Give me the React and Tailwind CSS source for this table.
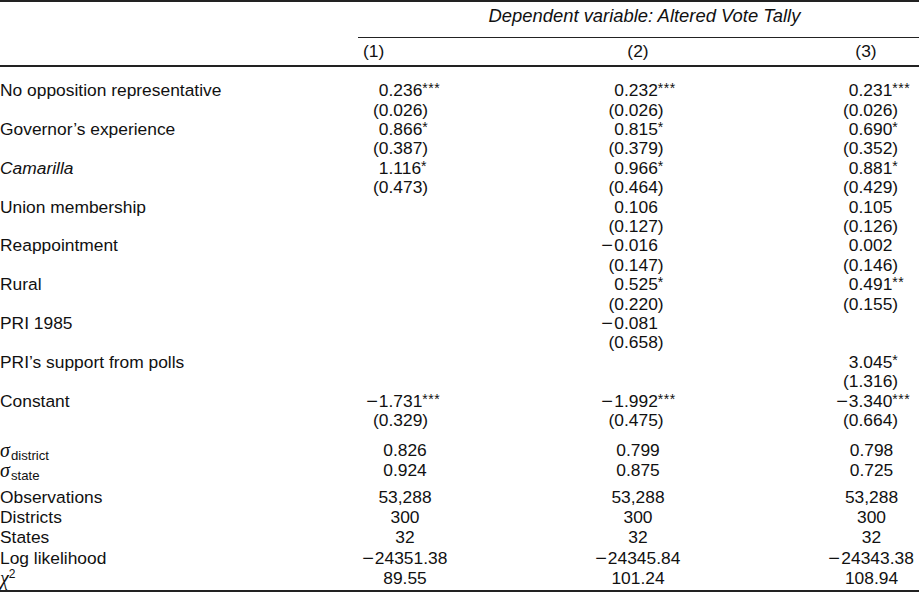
const COLS = 'grid grid-cols-[358px_94px_372px_95px]'
const INT_W = ['w-[30.5px]', 'w-[172px]', 'w-[34.5px]']

const vars = [
  { label: 'No opposition representative', coef: [['0.236', '***'], ['0.232', '***'], ['0.231', '***']], se: ['0.026', '0.026', '0.026'] },
  { label: 'Governor’s experience', coef: [['0.866', '*'], ['0.815', '*'], ['0.690', '*']], se: ['0.387', '0.379', '0.352'] },
  { label: 'Camarilla', italic: true, coef: [['1.116', '*'], ['0.966', '*'], ['0.881', '*']], se: ['0.473', '0.464', '0.429'] },
  { label: 'Union membership', coef: [null, ['0.106', ''], ['0.105', '']], se: [null, '0.127', '0.126'] },
  { label: 'Reappointment', coef: [null, ['−0.016', ''], ['0.002', '']], se: [null, '0.147', '0.146'] },
  { label: 'Rural', coef: [null, ['0.525', '*'], ['0.491', '**']], se: [null, '0.220', '0.155'] },
  { label: 'PRI 1985', coef: [null, ['−0.081', ''], null], se: [null, '0.658', null] },
  { label: 'PRI’s support from polls', coef: [null, null, ['3.045', '*']], se: [null, null, '1.316'] },
  { label: 'Constant', coef: [['−1.731', '***'], ['−1.992', '***'], ['−3.340', '***']], se: ['0.329', '0.475', '0.664'] },
]

const stats = [
  { label: 'Observations', vals: ['53,288', '53,288', '53,288'] },
  { label: 'Districts', vals: ['300', '300', '300'] },
  { label: 'States', vals: ['32', '32', '32'] },
  { label: 'Log likelihood', vals: ['−24351.38', '−24345.84', '−24343.38'] },
  { label: 'chi', vals: ['89.55', '101.24', '108.94'] },
]

function Minus() {
  return <span className="mr-[2px] inline-block scale-x-[1.15]">−</span>
}

function Num({ text }) {
  if (!text.startsWith('−')) return text
  return (
    <>
      <Minus />
      {text.slice(1)}
    </>
  )
}

function Dec({ value, stars, paren, col }) {
  if (!value) return <div />
  const [i, f] = value.split('.')
  return (
    <div className="flex whitespace-nowrap">
      <span className={`${INT_W[col]} shrink-0 text-right`}>
        {paren ? '(' : ''}
        <Num text={i} />
      </span>
      <span>
        .{f}
        {paren ? ')' : ''}
        {stars && <span className="relative -top-[3px] text-[14px] tracking-[0.5px]">{stars}</span>}
      </span>
    </div>
  )
}

function Sigma({ sub }) {
  return (
    <span>
      <span className="font-['Liberation_Serif',serif] text-[20px] italic">σ</span>
      <span className="relative top-[3px] ml-[1px] text-[13.2px]">{sub}</span>
    </span>
  )
}

export default function App() {
  return (
    <div className="w-[919px] bg-white text-[17.4px] text-[#111] font-['Liberation_Sans',Arial,sans-serif]">
      <div className="h-[1.5px] bg-[#222]" />

      {/* dependent variable header */}
      <div className="ml-[358px] pt-[4.5px] pb-[11.5px] pl-[12px] text-center text-[18.4px] italic leading-[19.5px]">
        Dependent variable: Altered Vote Tally
      </div>
      <div className="ml-[358px] h-px bg-[#222]" />
      <div className={`${COLS} pt-[4.4px] pb-[3.6px] leading-[19.5px]`}>
        <div />
        <div className="pl-[5px]">(1)</div>
        <div className="text-center">(2)</div>
        <div className="pr-[11px] text-center">(3)</div>
      </div>
      <div className="h-[1.5px] bg-[#222]" />

      {/* coefficients */}
      <div className="pt-[14.3px]">
        {vars.map(v => (
          <div key={v.label}>
            <div className={`${COLS} h-[19.4px] leading-[19.4px]`}>
              <div className={v.italic ? 'italic' : ''}>{v.label}</div>
              {v.coef.map((c, k) => (
                <Dec key={k} col={k} value={c?.[0]} stars={c?.[1]} />
              ))}
            </div>
            <div className={`${COLS} h-[19.4px] leading-[19.4px]`}>
              <div />
              {v.se.map((s, k) => (
                <Dec key={k} col={k} value={s} paren />
              ))}
            </div>
          </div>
        ))}
      </div>

      {/* random effects */}
      <div className="mt-[9.2px]">
        {[['district', ['0.826', '0.799', '0.798']], ['state', ['0.924', '0.875', '0.725']]].map(([sub, vals]) => (
          <div key={sub} className={`${COLS} h-[20.7px] leading-[20.7px]`}>
            <div><Sigma sub={sub} /></div>
            {vals.map((x, k) => (
              <div key={k} className="text-center">{x}</div>
            ))}
          </div>
        ))}
      </div>

      {/* model stats */}
      <div className="mt-[6.1px]">
        {stats.map(s => (
          <div key={s.label} className={`${COLS} h-[20.2px] leading-[20.2px]`}>
            <div>
              {s.label === 'chi' ? (
                <span>
                  <span className="font-['Liberation_Serif',serif] text-[20px] italic">χ</span>
                  <span className="relative -top-[7px] text-[12px]">2</span>
                </span>
              ) : (
                s.label
              )}
            </div>
            {s.vals.map((x, k) => (
              <div key={k} className="text-center">
                <Num text={x} />
              </div>
            ))}
          </div>
        ))}
      </div>

      <div className="mt-[2.5px] h-[1.5px] bg-[#222]" />
    </div>
  )
}
